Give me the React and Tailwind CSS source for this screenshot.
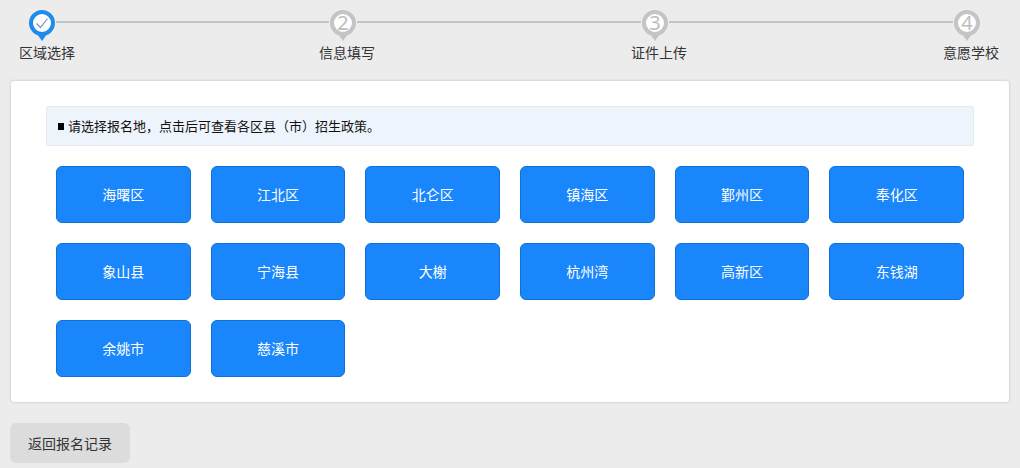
const font = { fontFamily: '"Noto Sans CJK SC", "Liberation Sans", sans-serif' };

function Pin({ active, n }) {
  const c = active ? "#1f8ceb" : "#c4c4c4";
  return (
    <svg width="28" height="32" viewBox="0 0 28 32" className="shrink-0">
      <path d="M14 31 L7.5 22 L20.5 22 Z" fill={c} />
      <circle cx="14" cy="13" r="11" fill="#fff" stroke={c} strokeWidth="4" />
      {active ? (
        <path d="M8.5 13.5 L12.5 17.5 L19.5 8.5" fill="none" stroke="#7d8fd8" strokeWidth="1.2" />
      ) : (
        <text x="14" y="20" textAnchor="middle" fontSize="20" fill="#bdbdbd" fontFamily='"Noto Sans", sans-serif'>{n}</text>
      )}
    </svg>
  );
}

const areas = ["海曙区","江北区","北仑区","镇海区","鄞州区","奉化区","象山县","宁海县","大榭","杭州湾","高新区","东钱湖","余姚市","慈溪市"];

export default function App() {
  return (
    <div style={font} className="w-[1020px] h-[468px] overflow-hidden bg-[#ececec] flex flex-col">
      <div className="flex items-start pl-[28px] pt-[10px] h-[42px] shrink-0">
        <Pin active />
        <div className="w-[273px] h-[2px] mt-[11px] bg-[#c4c4c4]" />
        <Pin n={2} />
        <div className="w-[284px] h-[2px] mt-[11px] bg-[#c4c4c4]" />
        <Pin n={3} />
        <div className="w-[284px] h-[2px] mt-[11px] bg-[#c4c4c4]" />
        <Pin n={4} />
      </div>
      <div className="flex pl-[19px] text-[14px] leading-[20px] text-[#333] h-[39px] shrink-0">
        <span className="w-[300px]">区域选择</span>
        <span className="w-[312px]">信息填写</span>
        <span className="w-[312px]">证件上传</span>
        <span>意愿学校</span>
      </div>
      <div className="mx-[11px] w-[998px] h-[321px] shrink-0 bg-white rounded-[3px] shadow-[0_0_3px_rgba(0,0,0,0.2)] px-[35px] pt-[25px]">
        <div className="h-[40px] flex items-center gap-[4px] pl-[11px] bg-[#eef4fb] border border-[#e6ebf2] rounded-[2px] text-[13px] text-[#111]">
          <span className="w-[6px] h-[7px] bg-black shrink-0" />
          <span>请选择报名地，点击后可查看各区县（市）招生政策。</span>
        </div>
        <div className="mt-[20px] mx-[10px] grid grid-cols-6 gap-x-[20px] gap-y-[20px]">
          {areas.map((a) => (
            <button key={a} className="h-[57px] bg-[#1a86fb] border border-[#1070d4] rounded-[6px] text-white text-[14px] flex items-center justify-center">
              {a}
            </button>
          ))}
        </div>
      </div>
      <button className="mt-[21px] ml-[10px] w-[120px] h-[40px] shrink-0 bg-[#dcdcdc] rounded-[6px] text-[14px] text-[#333] flex items-center justify-center">
        返回报名记录
      </button>
    </div>
  );
}
